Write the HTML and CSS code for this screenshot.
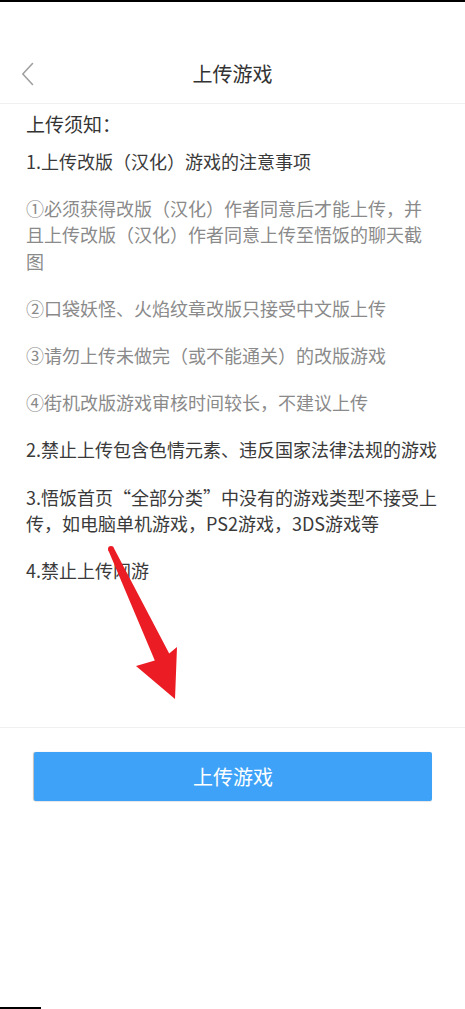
FILE: index.html
```html
<!DOCTYPE html>
<html lang="zh-CN">
<head>
<meta charset="utf-8">
<title>上传游戏</title>
<link rel="stylesheet" href="styles.css">
</head>
<body>
<div class="page">
  <div class="topline"></div>
  <div class="status"></div>
  <header class="header">
    <span class="back">
      <svg width="13" height="24" viewBox="0 0 13 24"><path d="M11.5 1.5 L1.8 12 L11.5 22.5" fill="none" stroke="#a0a0a0" stroke-width="1.6" stroke-linecap="round" stroke-linejoin="round"/></svg>
    </span>
    <h1 class="title">上传游戏</h1>
    <span></span>
  </header>
  <main class="content">
    <h2 class="notice-title">上传须知：</h2>
    <p class="item dark">1.上传改版（汉化）游戏的注意事项</p>
    <p class="item gray">①必须获得改版（汉化）作者同意后才能上传，并且上传改版（汉化）作者同意上传至悟饭的聊天截图</p>
    <p class="item gray">②口袋妖怪、火焰纹章改版只接受中文版上传</p>
    <p class="item gray">③请勿上传未做完（或不能通关）的改版游戏</p>
    <p class="item gray">④街机改版游戏审核时间较长，不建议上传</p>
    <p class="item dark">2.禁止上传包含色情元素、违反国家法律法规的游戏</p>
    <p class="item dark">3.悟饭首页“全部分类”中没有的游戏类型不接受上传，如电脑单机游戏，PS2游戏，3DS游戏等</p>
    <p class="item dark">4.禁止上传网游</p>
  </main>
  <footer class="footer">
    <button class="upload-btn">上传游戏</button>
  </footer>
  <div class="bottomline"></div>
  <svg class="arrow" width="465" height="1009" viewBox="0 0 465 1009">
    <circle cx="111" cy="549" r="3" fill="#ec1c24"/>
    <polygon points="108.3,550.3 154.8,660.4 136,666 175,699 177,647 169.2,653.6 113.7,547.7" fill="#ec1c24"/>
  </svg>
</div>
</body>
</html>
```
FILE: styles.css
```css
* { box-sizing: border-box; }
html, body {
  margin: 0;
  padding: 0;
  background: #ffffff;
}
body {
  font-family: "Noto Sans CJK SC", "Noto Sans", "Liberation Sans", sans-serif;
  color: #333;
}
.page {
  position: relative;
  width: 465px;
  height: 1009px;
  overflow: hidden;
  display: flex;
  flex-direction: column;
  background: #fff;
}
.topline {
  height: 2px;
  background: #000;
  flex: none;
}
.status {
  height: 40px;
  flex: none;
}
.header {
  height: 62px;
  flex: none;
  display: grid;
  grid-template-columns: 60px 1fr 60px;
  align-items: center;
  border-bottom: 1px solid #f0f0f0;
  padding-top: 2px;
}
.back {
  display: flex;
  align-items: center;
  padding-left: 21px;
}
.back svg { display: block; }
.title {
  margin: 0;
  text-align: center;
  font-size: 20px;
  font-weight: 400;
  color: #333;
  line-height: 28px;
}
.content {
  height: 623px;
  flex: none;
  padding: 7px 26px 0 26px;
}
.notice-title {
  margin: 0 0 10.5px 0;
  font-size: 19px;
  font-weight: 400;
  line-height: 26px;
  color: #333;
}
.item {
  margin: 0 0 20.8px 0;
  font-size: 18px;
  line-height: 26.4px;
}
.item.dark { color: #3a3a3a; }
.item.gray { color: #8a8a8a; }
.footer {
  flex: none;
  border-top: 1px solid #f0f0f0;
  padding: 24px 33px 0 34px;
}
.upload-btn {
  display: block;
  width: 100%;
  height: 49px;
  border: none;
  border-radius: 2px;
  background: #3ea3f8;
  color: #fff;
  font-family: inherit;
  font-size: 20px;
  box-shadow: -1px 0 1px rgba(0,0,0,0.25), 0 1px 1px rgba(0,0,0,0.08);
  padding: 0;
}
.bottomline {
  position: absolute;
  left: 0;
  bottom: 0;
  width: 41px;
  height: 2px;
  background: #000;
}
.arrow {
  position: absolute;
  left: 0;
  top: 0;
  pointer-events: none;
}
```
